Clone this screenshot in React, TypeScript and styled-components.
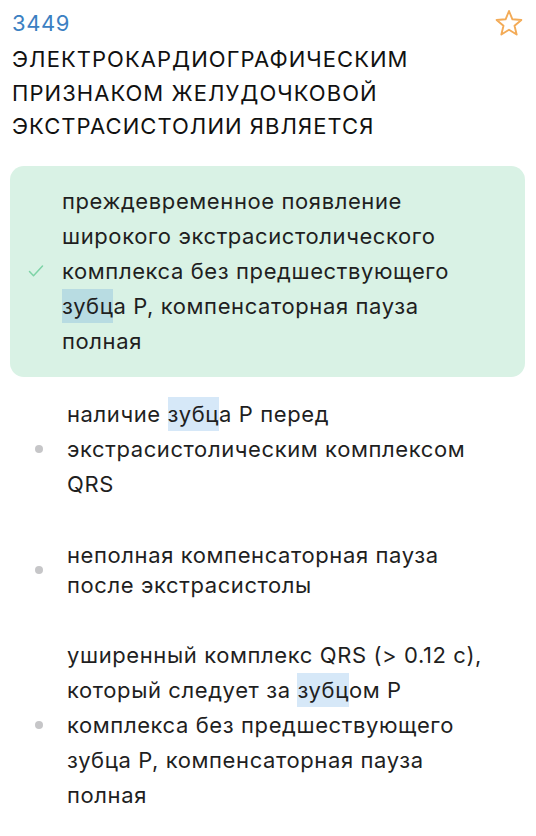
import { FC, ReactNode } from 'react';
import styled, { createGlobalStyle } from 'styled-components';

type Option = {
	text: ReactNode;
	correct?: boolean;
	tight?: boolean;
};

const GlobalStyle = createGlobalStyle`
	body {
		margin: 0;
		background: #ffffff;
		font-family: Inter, 'Noto Sans', sans-serif;
		-webkit-font-smoothing: antialiased;
	}
`;

const Page = styled.div`
	padding: 8px 11px 0 10px;
`;

const Header = styled.div`
	display: flex;
	justify-content: space-between;
	align-items: flex-start;
	padding-left: 2px;
`;

const QuestionNumber = styled.div`
	font-size: 22px;
	line-height: 30px;
	color: #3b80c2;
	letter-spacing: 0.6px;
`;

const StarButton = styled.div`
	display: flex;
	margin-top: 1px;
	margin-right: 2px;
`;

const Title = styled.h1`
	margin: 5px 0 0 2px;
	font-size: 22px;
	font-weight: 400;
	line-height: 33.5px;
	letter-spacing: 1.05px;
	text-transform: uppercase;
	color: #111111;
`;

const OptionList = styled.div`
	display: flex;
	flex-direction: column;
	gap: 2px;
	margin-top: 22px;
`;

const OptionRow = styled.div<{ $correct?: boolean }>`
	display: grid;
	grid-template-columns: ${({ $correct }) => ($correct ? '52px' : '57px')} 1fr;
	align-items: center;
	padding: 18px 33px 18px 0;
	border-radius: 14px;
	background: ${({ $correct }) => ($correct ? '#d9f2e5' : 'transparent')};
`;

const Marker = styled.div`
	display: flex;
	justify-content: center;
	align-items: center;
`;

const Dot = styled.span`
	width: 8px;
	height: 8px;
	border-radius: 50%;
	background: #c6c6c8;
`;

const OptionText = styled.div<{ $tight?: boolean }>`
	font-size: 22px;
	line-height: ${({ $tight }) => ($tight ? '30px' : '35px')};
	letter-spacing: 0.6px;
	color: #1f1f1f;
`;

const Hit = styled.span<{ $strong?: boolean }>`
	padding: 4px 0;
	background: ${({ $strong }) => ($strong ? '#b8dce2' : '#d6e8f8')};
`;

const options: Option[] = [
	{
		correct: true,
		text: (
			<>
				преждевременное появление широкого экстрасистолического комплекса без предшествующего <Hit $strong>зубц</Hit>а Р, компенсаторная пауза полная
			</>
		),
	},
	{
		text: (
			<>
				наличие <Hit>зубц</Hit>а Р перед экстрасистолическим комплексом QRS
			</>
		),
	},
	{
		tight: true,
		text: <>неполная компенсаторная пауза после экстрасистолы</>,
	},
	{
		text: (
			<>
				уширенный комплекс QRS (&gt; 0.12 с), который следует за <Hit>зубц</Hit>ом Р комплекса без предшествующего зубца Р, компенсаторная пауза полная
			</>
		),
	},
];

// five-point outline star for the bookmark toggle
const StarIcon = () => (
	<svg width="28" height="28" viewBox="0 0 28 28" fill="none">
		<path
			d="M14 2L17.41 10.31 26.36 10.98 19.52 16.79 21.64 25.52 14 20.8 6.36 25.52 8.48 16.79 1.64 10.98 10.59 10.31Z"
			stroke="#f3ab57"
			strokeWidth="1.9"
			strokeLinejoin="round"
		/>
	</svg>
);

const CheckIcon = () => (
	<svg width="16" height="14" viewBox="0 0 16 14" fill="none">
		<path d="M1.5 7.5l4 4.2L14.5 2" stroke="#7dd3a6" strokeWidth="1.5" strokeLinecap="round" strokeLinejoin="round" />
	</svg>
);

const App: FC = () => (
	<>
		<GlobalStyle />
		<Page>
			<Header>
				<QuestionNumber>3449</QuestionNumber>
				<StarButton>
					<StarIcon />
				</StarButton>
			</Header>
			<Title>Электрокардиографическим признаком желудочковой экстрасистолии является</Title>
			<OptionList>
				{options.map((option, i) => (
					<OptionRow key={i} $correct={option.correct}>
						<Marker>{option.correct ? <CheckIcon /> : <Dot />}</Marker>
						<OptionText $tight={option.tight}>{option.text}</OptionText>
					</OptionRow>
				))}
			</OptionList>
		</Page>
	</>
);

export default App;
